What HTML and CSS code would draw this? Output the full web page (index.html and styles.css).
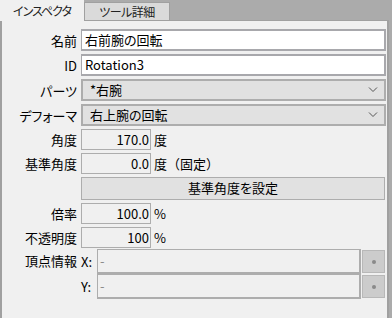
FILE: index.html
```html
<!DOCTYPE html>
<html lang="ja">
<head>
  <meta charset="UTF-8">
  <title>インスペクタ</title>
  <link rel="stylesheet" href="styles.css">
</head>
<body>
  <div class="tabs">
    <div class="tab active">インスペクタ</div>
    <div class="tab">ツール詳細</div>
  </div>
  <div class="panel">
    <div class="row">
      <label>名前</label>
      <div class="field text">右前腕の回転</div>
    </div>
    <div class="row">
      <label>ID</label>
      <div class="field text">Rotation3</div>
    </div>
    <div class="row">
      <label>パーツ</label>
      <div class="field select"><span>*右腕</span><svg width="10" height="6" viewBox="0 0 10 6"><path d="M1 0.5 L5 4.5 L9 0.5" fill="none" stroke="#555" stroke-width="1"/></svg></div>
    </div>
    <div class="row">
      <label>デフォーマ</label>
      <div class="field select"><span>右上腕の回転</span><svg width="10" height="6" viewBox="0 0 10 6"><path d="M1 0.5 L5 4.5 L9 0.5" fill="none" stroke="#555" stroke-width="1"/></svg></div>
    </div>
    <div class="row">
      <label>角度</label>
      <div class="num-line"><div class="field num">170.0</div><span class="unit">度</span></div>
    </div>
    <div class="row">
      <label>基準角度</label>
      <div class="num-line"><div class="field num">0.0</div><span class="unit">度（固定）</span></div>
    </div>
    <div class="row">
      <label></label>
      <div class="field button">基準角度を設定</div>
    </div>
    <div class="row">
      <label>倍率</label>
      <div class="num-line"><div class="field num">100.0</div><span class="unit">%</span></div>
    </div>
    <div class="row">
      <label>不透明度</label>
      <div class="num-line"><div class="field num">100</div><span class="unit">%</span></div>
    </div>
    <div class="vertex">
      <label>頂点情報</label>
      <div class="coords">
        <div class="coord">
          <span class="axis">X:</span>
          <div class="field disabled">-</div>
          <div class="dot-btn"><i></i></div>
        </div>
        <div class="coord">
          <span class="axis">Y:</span>
          <div class="field disabled">-</div>
          <div class="dot-btn"><i></i></div>
        </div>
      </div>
    </div>
  </div>
</body>
</html>
```

FILE: styles.css
```css
html, body {
  margin: 0;
  padding: 0;
  height: 100%;
  overflow: hidden;
  background: #ababab;
  font-family: "Noto Sans CJK JP", sans-serif;
  font-feature-settings: "palt";
  font-size: 12px;
  color: #000;
}

.tabs {
  display: flex;
  align-items: flex-end;
  height: 20px;
}

.tab {
  box-sizing: border-box;
  height: 18px;
  width: 86px;
  text-align: center;
  line-height: 17px;
  background: #dadada;
  border: 1px solid #a0a0a0;
  border-bottom: none;
  color: #222;
  font-size: 12px;
  letter-spacing: -0.5px;
}

.tab.active {
  height: 21px;
  width: 84px;
  margin-bottom: -1px;
  background: #f0f0f0;
  border-color: #f0f0f0;
  line-height: 20px;
  position: relative;
  z-index: 1;
  letter-spacing: -1px;
}

.panel {
  box-sizing: border-box;
  width: 389px;
  height: 298px;
  background: #f0f0f0;
  border: 1px solid #a0a0a0;
  border-bottom: none;
  border-left-width: 2px;
  border-right-width: 2px;
  padding: 8px 1px 0 0;
  display: flex;
  flex-direction: column;
  gap: 3px;
}

.row {
  display: grid;
  grid-template-columns: 75px 1fr;
  column-gap: 4px;
  align-items: center;
}

label {
  text-align: right;
  white-space: nowrap;
  font-size: 13px;
}

.field {
  box-sizing: border-box;
  height: 22px;
  border: 1px solid #a5a5a5;
  line-height: 20px;
  padding: 0 3px;
  white-space: nowrap;
  overflow: hidden;
  font-size: 13px;
}

.text {
  background: #fff;
  border-width: 2px 2px 2px 1px;
  border-color: #a8a8ac;
  line-height: 18px;
}

.select {
  background: #e1e1e1;
  border-color: #adadad;
  border-width: 2px;
  line-height: 18px;
  padding: 0 6px 0 7px;
  display: flex;
  justify-content: space-between;
  align-items: center;
}

.num-line {
  display: flex;
  align-items: center;
}

.num {
  width: 70px;
  height: 21px;
  line-height: 19px;
  text-align: right;
  background: #f0f0f0;
  border-color: #adadad;
  padding: 0 1px 0 3px;
}

.unit {
  padding-left: 3px;
  font-size: 13px;
  font-feature-settings: normal;
}

.button {
  margin-right: 1px;
  background: #e1e1e1;
  border-color: #adadad;
  text-align: center;
  height: 23px;
}

.vertex {
  display: grid;
  grid-template-columns: 75px 1fr;
  column-gap: 4px;
  margin-top: -2px;
}

.vertex label {
  line-height: 24px;
}

.coords {
  display: flex;
  flex-direction: column;
}

.coord {
  display: flex;
  align-items: center;
  gap: 1px;
}

.axis {
  width: 15px;
  text-align: left;
  font-size: 13px;
}

.disabled {
  flex: 1;
  height: 25px;
  border-width: 1px 2px 2px 1px;
  border-color: #adadad;
  background: #f0f0f0;
  color: #8a8a8a;
  line-height: 22px;
  padding-left: 2px;
}

.dot-btn {
  box-sizing: border-box;
  width: 23px;
  height: 23px;
  margin-right: 1px;
  background: #cccccc;
  border: 1px solid #b8b8b8;
  display: flex;
  align-items: center;
  justify-content: center;
}

.dot-btn i {
  width: 4px;
  height: 4px;
  border-radius: 2px;
  background: #8a8a8a;
}
```
